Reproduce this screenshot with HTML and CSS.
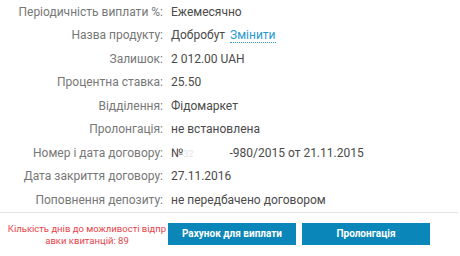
FILE: index.html
```html
<!DOCTYPE html>
<html lang="uk">
<head>
    <meta charset="UTF-8">
    <title>Депозит</title>
    <link rel="stylesheet" href="styles.css">
</head>
<body>
    <div class="details">
        <div class="row"><span class="label">Періодичність виплати %:</span><span class="value">Ежемесячно</span></div>
        <div class="row"><span class="label">Назва продукту:</span><span class="value">Добробут <a href="#" class="change-link">Змінити</a></span></div>
        <div class="row"><span class="label">Залишок:</span><span class="value">2 012.00 UAH</span></div>
        <div class="row"><span class="label">Процентна ставка:</span><span class="value">25.50</span></div>
        <div class="row"><span class="label">Відділення:</span><span class="value">Фідомаркет</span></div>
        <div class="row"><span class="label">Пролонгація:</span><span class="value">не встановлена</span></div>
        <div class="row"><span class="label">Номер і дата договору:</span><span class="value">№<span class="hidden-num">32</span>-980/2015 от 21.11.2015</span></div>
        <div class="row"><span class="label">Дата закриття договору:</span><span class="value">27.11.2016</span></div>
        <div class="row"><span class="label">Поповнення депозиту:</span><span class="value">не передбачено договором</span></div>
    </div>

    <div class="actions">
        <div class="notice">Кількість днів до можливості відправки квитанцій: 89</div>
        <button class="btn">Рахунок для виплати</button>
        <button class="btn">Пролонгація</button>
    </div>
</body>
</html>
```

FILE: styles.css
```css
body {
    margin: 0;
    background: #fff;
    font-family: Roboto, "Liberation Sans", sans-serif;
    color: #444;
}

.details {
    border-bottom: 1px solid #e3e3e3;
    margin-right: 2px;
}

.row {
    display: flex;
    height: 23.5px;
    align-items: center;
    font-size: 12px;
}

.label {
    width: 163px;
    text-align: right;
    color: #777;
    padding-right: 8px;
    flex-shrink: 0;
}

.value {
    color: #4a4a4a;
}

.change-link {
    color: #2a9ad2;
    text-decoration: none;
    border-bottom: 1px dotted #2a9ad2;
    margin-left: 2px;
}

.hidden-num {
    color: #e4e4e4;
    font-size: 9px;
    padding-right: 36px;
}

.actions {
    display: flex;
    align-items: flex-start;
    padding-top: 10px;
}

.notice {
    width: 160px;
    padding: 0 1px 0 7px;
    text-align: center;
    color: #e8434a;
    font-size: 9.5px;
    line-height: 12px;
    word-break: break-all;
}

.btn {
    width: 128px;
    height: 22px;
    margin-right: 6px;
    background: #0a86b8;
    color: #fff;
    border: none;
    font-family: Roboto, "Liberation Sans", sans-serif;
    font-size: 10px;
    font-weight: 700;
    cursor: pointer;
}
```
